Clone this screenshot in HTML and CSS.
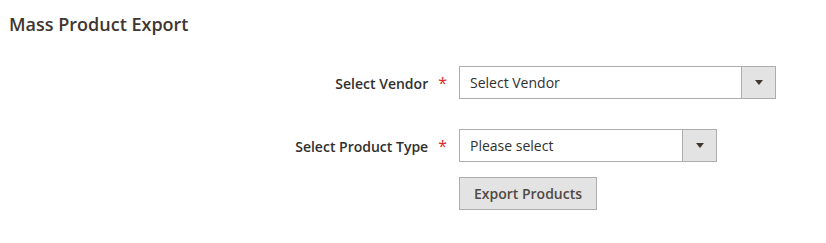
FILE: index.html
```html
<!DOCTYPE html>
<html lang="en">
<head>
    <meta charset="UTF-8">
    <title>Mass Product Export</title>
    <link rel="stylesheet" href="styles.css">
</head>
<body>
    <div class="page">
        <div class="legend">Mass Product Export</div>

        <div class="fieldset">
            <div class="field">
                <label class="label required">Select Vendor</label>
                <div class="control">
                    <div class="select wide">
                        <span class="value">Select Vendor</span>
                        <span class="arrow"></span>
                    </div>
                </div>
            </div>

            <div class="field">
                <label class="label required">Select Product Type</label>
                <div class="control">
                    <div class="select">
                        <span class="value">Please select</span>
                        <span class="arrow"></span>
                    </div>
                </div>
            </div>

            <div class="field actions">
                <div class="label"></div>
                <div class="control">
                    <button class="button">Export Products</button>
                </div>
            </div>
        </div>
    </div>
</body>
</html>
```
FILE: styles.css
```css
*{
    margin: 0;
    padding: 0;
    box-sizing: border-box;
}
body{
    font-family: "Open Sans", "Noto Sans", sans-serif;
    font-size: 14px;
    color: #303030;
    background: #fff;
}
.page{
    padding: 12px 0 0 9px;
}
.legend{
    font-size: 18px;
    font-weight: 600;
    color: #41362f;
    line-height: 24px;
}
.fieldset{
    padding-top: 30px;
}
.field{
    display: grid;
    grid-template-columns: 438px 1fr;
    column-gap: 12px;
    align-items: center;
    margin-bottom: 30px;
}
.field.actions{
    margin-top: -15px;
}
.label{
    text-align: right;
    font-weight: 600;
    color: #303030;
}
.label.required::after{
    content: "*";
    color: #e22626;
    margin-left: 10px;
    font-weight: 400;
    font-size: 16px;
}
.select{
    display: flex;
    width: 258px;
    height: 33px;
    border: 1px solid #adadad;
    background: #fff;
}
.select.wide{
    width: 317px;
}
.value{
    flex: 1;
    padding: 0 10px;
    line-height: 31px;
}
.arrow{
    width: 34px;
    border-left: 1px solid #adadad;
    background: #e3e3e3;
    display: flex;
    align-items: center;
    justify-content: center;
}
.arrow::before{
    content: "";
    border-top: 5px solid #41362f;
    border-left: 4px solid transparent;
    border-right: 4px solid transparent;
}
.button{
    font-family: inherit;
    font-size: 14px;
    font-weight: 600;
    color: #514943;
    background: #e3e3e3;
    border: 1px solid #adadad;
    height: 33px;
    width: 138px;
    cursor: pointer;
}
```
